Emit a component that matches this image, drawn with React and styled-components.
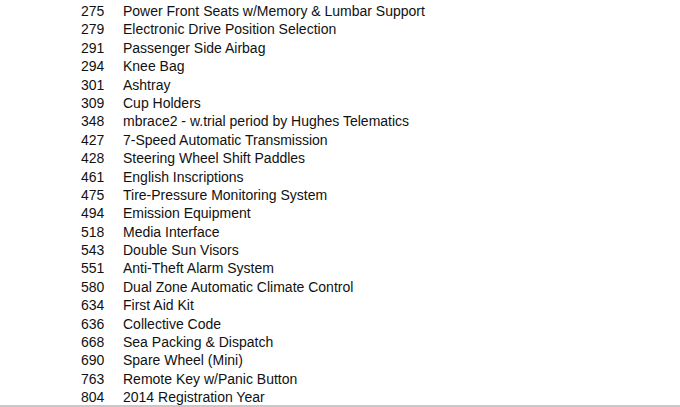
import React from 'react';
import styled, { createGlobalStyle } from 'styled-components';

const GlobalStyle = createGlobalStyle`
  html, body {
    margin: 0;
    padding: 0;
    background: #ffffff;
  }
`;

const Page = styled.div`
  width: 680px;
  height: 407px;
  box-sizing: border-box;
  border-bottom: 2px solid #c8c8c8;
  padding: 2px 0 0 81px;
  font-family: "Liberation Sans", Arial, sans-serif;
  font-size: 14px;
  color: #111111;
  overflow: hidden;
`;

const List = styled.div`
  display: grid;
  grid-template-columns: 42px auto;
  grid-auto-rows: 18.4px;
  align-items: center;
`;

const Code = styled.span`
  line-height: 18.4px;
`;

const Desc = styled.span`
  line-height: 18.4px;
  white-space: nowrap;
`;

const options = [
  ['275', 'Power Front Seats w/Memory & Lumbar Support'],
  ['279', 'Electronic Drive Position Selection'],
  ['291', 'Passenger Side Airbag'],
  ['294', 'Knee Bag'],
  ['301', 'Ashtray'],
  ['309', 'Cup Holders'],
  ['348', 'mbrace2 - w.trial period by Hughes Telematics'],
  ['427', '7-Speed Automatic Transmission'],
  ['428', 'Steering Wheel Shift Paddles'],
  ['461', 'English Inscriptions'],
  ['475', 'Tire-Pressure Monitoring System'],
  ['494', 'Emission Equipment'],
  ['518', 'Media Interface'],
  ['543', 'Double Sun Visors'],
  ['551', 'Anti-Theft Alarm System'],
  ['580', 'Dual Zone Automatic Climate Control'],
  ['634', 'First Aid Kit'],
  ['636', 'Collective Code'],
  ['668', 'Sea Packing & Dispatch'],
  ['690', 'Spare Wheel (Mini)'],
  ['763', 'Remote Key w/Panic Button'],
  ['804', '2014 Registration Year'],
];

const App = () => {
  return (
    <>
      <GlobalStyle />
      <Page>
        <List>
          {options.map(([code, desc]) => (
            <React.Fragment key={code}>
              <Code>{code}</Code>
              <Desc>{desc}</Desc>
            </React.Fragment>
          ))}
        </List>
      </Page>
    </>
  );
};

export default App;
